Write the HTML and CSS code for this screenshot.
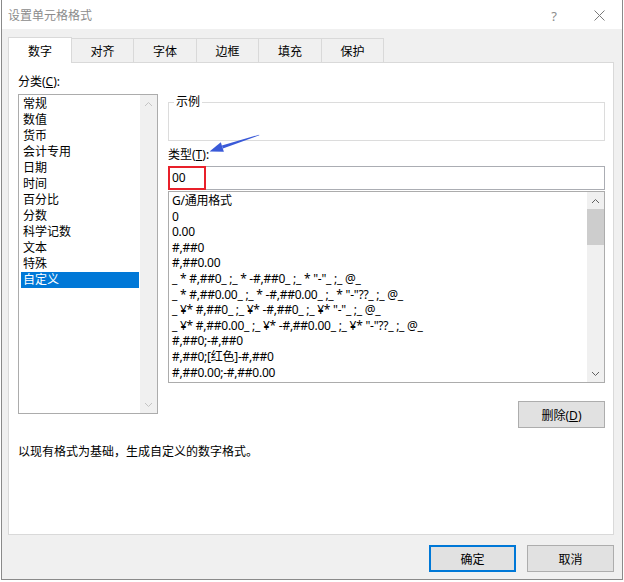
FILE: index.html
```html
<!DOCTYPE html>
<html lang="zh-CN">
<head>
<meta charset="utf-8">
<title>设置单元格格式</title>
<link rel="stylesheet" href="styles.css">
</head>
<body>
<div class="window">
  <div class="titlebar">
    <span class="title">设置单元格格式</span>
    <span class="help">?</span>
    <svg class="close" width="11" height="11" viewBox="0 0 11 11"><path d="M0.5 0.5L10.5 10.5M10.5 0.5L0.5 10.5" stroke="#7a7a7a" stroke-width="1" fill="none"/></svg>
  </div>
  <div class="client">
    <div class="tabs">
      <div class="tab active">数字</div>
      <div class="tab w62">对齐</div>
      <div class="tab">字体</div>
      <div class="tab w62">边框</div>
      <div class="tab">填充</div>
      <div class="tab w62">保护</div>
    </div>
    <div class="panel">
      <div class="cols">
        <div class="left">
          <div class="label">分类(<u>C</u>):</div>
          <div class="catlist">
            <div class="items">
              <div class="item">常规</div>
              <div class="item">数值</div>
              <div class="item">货币</div>
              <div class="item">会计专用</div>
              <div class="item">日期</div>
              <div class="item">时间</div>
              <div class="item">百分比</div>
              <div class="item">分数</div>
              <div class="item">科学记数</div>
              <div class="item">文本</div>
              <div class="item">特殊</div>
              <div class="item selected">自定义</div>
            </div>
            <div class="vscroll disabled">
              <div class="sbtn"><svg width="9" height="6" viewBox="0 0 9 6"><path d="M1 5L4.5 1.5L8 5" stroke="#c4c4c4" fill="none"/></svg></div>
              <div class="track"></div>
              <div class="sbtn"><svg width="9" height="6" viewBox="0 0 9 6"><path d="M1 1L4.5 4.5L8 1" stroke="#c4c4c4" fill="none"/></svg></div>
            </div>
          </div>
        </div>
        <div class="right">
          <fieldset class="sample"><legend>示例</legend><div class="sample-body"></div></fieldset>
          <div class="label type-label">类型(<u>T</u>):</div>
          <div class="typebox">00<span class="mark"></span></div>
          <div class="fmtlist">
            <div class="fitems">
              <div class="fitem">G/通用格式</div>
              <div class="fitem">0</div>
              <div class="fitem">0.00</div>
              <div class="fitem">#,##0</div>
              <div class="fitem">#,##0.00</div>
              <div class="fitem">_ * #,##0_ ;_ * -#,##0_ ;_ * "-"_ ;_ @_</div>
              <div class="fitem">_ * #,##0.00_ ;_ * -#,##0.00_ ;_ * "-"??_ ;_ @_</div>
              <div class="fitem">_ ¥* #,##0_ ;_ ¥* -#,##0_ ;_ ¥* "-"_ ;_ @_</div>
              <div class="fitem">_ ¥* #,##0.00_ ;_ ¥* -#,##0.00_ ;_ ¥* "-"??_ ;_ @_</div>
              <div class="fitem">#,##0;-#,##0</div>
              <div class="fitem">#,##0;[红色]-#,##0</div>
              <div class="fitem">#,##0.00;-#,##0.00</div>
            </div>
            <div class="vscroll">
              <div class="sbtn"><svg width="9" height="6" viewBox="0 0 9 6"><path d="M1 5L4.5 1.5L8 5" stroke="#606060" fill="none"/></svg></div>
              <div class="track"><div class="thumb"></div></div>
              <div class="sbtn"><svg width="9" height="6" viewBox="0 0 9 6"><path d="M1 1L4.5 4.5L8 1" stroke="#606060" fill="none"/></svg></div>
            </div>
          </div>
          <div class="del-row"><button class="btn">删除(<u>D</u>)</button></div>
        </div>
      </div>
      <div class="desc">以现有格式为基础，生成自定义的数字格式。</div>
    </div>
    <div class="footer">
      <button class="btn default">确定</button>
      <button class="btn">取消</button>
    </div>
  </div>
</div>
<svg class="arrow" width="60" height="26" viewBox="205 130 60 26">
  <polygon points="259.1,134.7 259.3,135.3 222.9,148.4 221.9,145.6" fill="#3a5ad8"/>
  <polygon points="209.5,151.5 220.8,142.3 223.9,151.8" fill="#3a5ad8"/>
</svg>
</body>
</html>
```

FILE: styles.css
```css
* { box-sizing: border-box; }

body {
  margin: 0;
  width: 624px;
  height: 582px;
  overflow: hidden;
  position: relative;
  background: #ffffff;
  font-family: "Noto Sans", "Noto Sans CJK SC", sans-serif;
  font-size: 12px;
  line-height: 16px;
  color: #000;
}

.window {
  margin-left: 1px;
  width: 622px;
  height: 580px;
  border-left: 1px solid #8a8a8a;
  border-right: 1px solid #8a8a8a;
  border-bottom: 1px solid #8a8a8a;
  display: flex;
  flex-direction: column;
}

.titlebar {
  height: 29px;
  flex: none;
  background: #fff;
  display: flex;
  align-items: center;
  padding-left: 6px;
  padding-top: 2px;
  color: #8c8c8c;
}

.title { font-size: 12px; }

.help {
  margin-left: auto;
  font-size: 13px;
  color: #8c8c8c;
}

.close {
  margin-left: 37px;
  margin-right: 17px;
}

.client {
  flex: 1;
  background: #f0f0f0;
  padding: 8px 8px 0 6px;
  display: flex;
  flex-direction: column;
}

.tabs {
  display: flex;
  align-items: flex-end;
  height: 25px;
  flex: none;
}

.tab {
  width: 63px;
  height: 24px;
  border: 1px solid #d9d9d9;
  border-left: none;
  border-bottom: none;
  background: #f0f0f0;
  display: flex;
  align-items: center;
  justify-content: center;
  padding-top: 2px;
}

.tab.w62 { width: 62px; }

.tab.active {
  width: 64px;
  height: 26px;
  margin-bottom: -1px;
  border-left: 1px solid #d9d9d9;
  background: #fff;
  position: relative;
  z-index: 1;
}

.panel {
  height: 473px;
  flex: none;
  background: #fff;
  border: 1px solid #d9d9d9;
  padding: 11px 8px 0 9px;
  position: relative;
  z-index: 0;
}

.cols {
  display: flex;
  gap: 10px;
  align-items: flex-start;
}

.left { width: 140px; flex: none; }

.label { height: 16px; }

.catlist {
  margin-top: 4px;
  height: 320px;
  border: 1px solid #acacac;
  display: flex;
}

.items {
  flex: 1;
  padding: 1px 1px 0 2px;
}

.item {
  height: 16px;
  padding-left: 2px;
  white-space: nowrap;
}

.item.selected {
  background: #0078d7;
  color: #fff;
}

.vscroll {
  width: 17px;
  flex: none;
  background: #f0f0f0;
  display: flex;
  flex-direction: column;
}

.sbtn {
  height: 17px;
  flex: none;
  display: flex;
  align-items: center;
  justify-content: center;
}

.track { flex: 1; }

.thumb {
  height: 36px;
  background: #cdcdcd;
}

.right {
  flex: 1;
  display: flex;
  flex-direction: column;
}

.sample {
  margin: 20px 0 0 0;
  padding: 0;
  border: 1px solid #dcdcdc;
  min-width: 0;
}

.sample legend {
  margin-left: 5px;
  padding: 0 2px;
  line-height: 16px;
}

.sample-body { height: 30px; }

.type-label { margin-top: 6px; }

.typebox {
  margin-top: 3px;
  height: 24px;
  border: 1px solid #abadb3;
  padding-left: 3px;
  line-height: 22px;
  position: relative;
}

.mark {
  position: absolute;
  left: 0;
  top: 0;
  width: 38px;
  height: 24px;
  margin: -1px 0 0 -1px;
  border: 2px solid #e8202a;
}

.fmtlist {
  margin-top: 1px;
  height: 192px;
  border: 1px solid #acacac;
  display: flex;
  overflow: hidden;
}

.fitems {
  flex: 1;
  padding: 1px 0 0 3px;
  overflow: hidden;
  letter-spacing: -0.25px;
}

.fitem {
  height: 15.6px;
  line-height: 15.6px;
  white-space: pre;
}

.del-row {
  margin-top: 18px;
  display: flex;
  justify-content: flex-end;
}

.btn {
  width: 87px;
  height: 27px;
  background: #e1e1e1;
  border: 1px solid #adadad;
  font-family: "Noto Sans", "Noto Sans CJK SC", sans-serif;
  font-size: 12px;
  color: #000;
  padding: 0;
}

.btn.default {
  border: 1px solid #0078d7;
  box-shadow: inset 0 0 0 1px #0078d7;
}

.desc { margin-top: 16px; }

.footer {
  margin-top: 10px;
  display: flex;
  justify-content: flex-end;
  gap: 11px;
}

.arrow {
  position: absolute;
  left: 205px;
  top: 130px;
}
```
